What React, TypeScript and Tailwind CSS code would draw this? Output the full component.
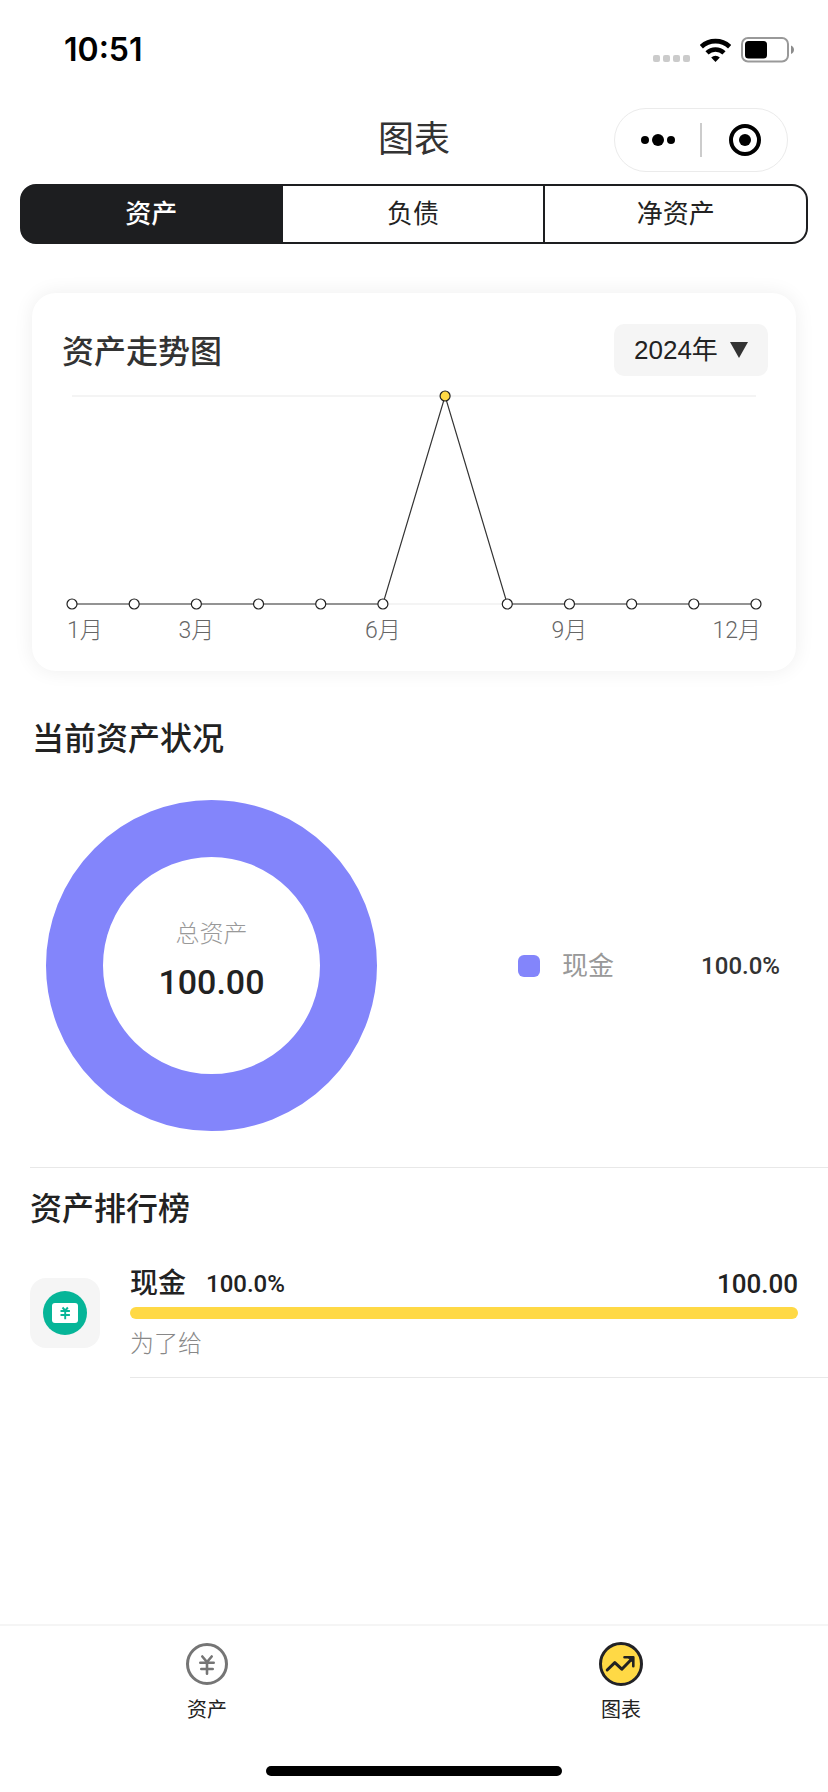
import clsx from 'clsx';
import { useState } from 'react';

const TABS = ['资产', '负债', '净资产'];
const YEARS = ['2024', '2023', '2022'];
const TREND = [0, 0, 0, 0, 0, 0, 100, 0, 0, 0, 0, 0];

const AXIS_LABELS: {
  month: number;
  anchor: 'start' | 'middle' | 'end';
}[] = [
  { month: 1, anchor: 'start' },
  { month: 3, anchor: 'middle' },
  { month: 6, anchor: 'middle' },
  { month: 9, anchor: 'middle' },
  { month: 12, anchor: 'end' },
];

const RANKING = [
  { name: '现金', percent: '100.0', amount: '100.00', note: '为了给' },
];

function StatusBar() {
  return (
    <div className="flex h-[100px] items-center justify-between pr-[34px] pl-16">
      <span className="font-['Inter',sans-serif] text-[32px] leading-10 font-semibold text-black">
        10:51
      </span>
      <div className="flex items-center gap-[10px]">
        <svg width="37" height="24" viewBox="0 0 37 24" fill="#cbcbcb">
          <rect x="0" y="17" width="7" height="7" rx="2" />
          <rect x="10" y="17" width="7" height="7" rx="2" />
          <rect x="20" y="17" width="7" height="7" rx="2" />
          <rect x="30" y="17" width="7" height="7" rx="2" />
        </svg>
        <svg width="31" height="24" viewBox="0 0 31 24" fill="none">
          <path
            d="M1.3 8.7A20.8 20.8 0 0 1 29.7 8.7"
            stroke="#000"
            strokeWidth="4.8"
          />
          <path
            d="M7 14.9A12.5 12.5 0 0 1 24 14.9"
            stroke="#000"
            strokeWidth="4.6"
          />
          <path d="M11.2 19.4A6.4 6.4 0 0 1 19.8 19.4L15.5 24Z" fill="#000" />
        </svg>
        <svg width="53" height="26" viewBox="0 0 53 26" fill="none">
          <rect
            x="1"
            y="1"
            width="46"
            height="23.5"
            rx="6"
            stroke="#999"
            strokeWidth="2"
          />
          <rect x="4" y="4" width="22" height="17.5" rx="3.5" fill="#000" />
          <path d="M50 8.5c4 1.6 4 7 0 8.6z" fill="#8c8c8c" />
        </svg>
      </div>
    </div>
  );
}

function NavBar() {
  return (
    <header className="grid h-20 grid-cols-[1fr_auto_1fr] items-center px-10">
      <span />
      <h1 className="text-[36px] leading-[48px] text-[#333]">图表</h1>
      <div className="flex h-16 w-[174px] items-center justify-self-end rounded-full border border-[#ebebeb]">
        <button
          aria-label="更多"
          className="flex flex-1 cursor-pointer justify-center"
        >
          <svg width="34" height="12" viewBox="0 0 34 12">
            <circle cx="4" cy="6" r="4" />
            <circle cx="17" cy="6" r="6" />
            <circle cx="30" cy="6" r="4" />
          </svg>
        </button>
        <span className="h-[34px] w-[2px] bg-[#ccc]" />
        <button
          aria-label="关闭"
          className="flex flex-1 cursor-pointer justify-center"
        >
          <svg width="32" height="32" viewBox="0 0 32 32">
            <circle
              cx="16"
              cy="16"
              r="14"
              fill="none"
              stroke="#000"
              strokeWidth="4"
            />
            <circle cx="16" cy="16" r="6" />
          </svg>
        </button>
      </div>
    </header>
  );
}

function TrendChart() {
  const left = 40;
  const step = 684 / 11;
  const top = 20;
  const bottom = 228;
  const points = TREND.map((value, i) => ({
    x: left + i * step,
    y: bottom - ((bottom - top) * value) / 100,
    active: value > 0,
  }));

  return (
    <svg viewBox="0 0 764 295" className="block h-auto w-full">
      <path d="M40 20H724M40 228H724" stroke="#f4f4f4" strokeWidth="2" />
      <polyline
        points={points.map(p => `${p.x},${p.y}`).join(' ')}
        fill="none"
        stroke="#333"
        strokeWidth="1.2"
      />
      {points.map(p => (
        <circle
          key={p.x}
          cx={p.x}
          cy={p.y}
          r="5"
          fill={p.active ? '#ffd945' : '#fff'}
          stroke="#222"
          strokeWidth="1.2"
        />
      ))}
      {AXIS_LABELS.map(({ month, anchor }) => {
        let x = left + (month - 1) * step;
        if (anchor === 'start') x -= 5;
        if (anchor === 'end') x += 5;
        return (
          <text
            key={month}
            x={x}
            y="262"
            textAnchor={anchor}
            className="fill-[#666] font-['Roboto','Noto_Sans_CJK_SC',sans-serif] text-[23px] font-light"
          >
            {month}月
          </text>
        );
      })}
    </svg>
  );
}

function TrendCard() {
  const [year, setYear] = useState('2024');

  return (
    <section className="mx-8 mt-[49px] rounded-3xl bg-white pt-[31px] shadow-[0_0_20px_rgba(0,0,0,0.07)]">
      <div className="flex items-center justify-between pr-7 pl-[30px]">
        <h2 className="pt-1 text-[32px] leading-[48px] font-medium text-[#333]">
          资产走势图
        </h2>
        <div className="relative">
          <select
            aria-label="年份"
            value={year}
            onChange={e => setYear(e.target.value)}
            className="h-[52px] w-[154px] cursor-pointer appearance-none rounded-[10px] bg-[#f5f5f5] pl-5 text-[26px] text-[#222]"
          >
            {YEARS.map(y => (
              <option key={y} value={y}>
                {y}年
              </option>
            ))}
          </select>
          <svg
            width="18"
            height="16"
            viewBox="0 0 18 16"
            className="pointer-events-none absolute top-[18px] right-5"
          >
            <path d="M0 0H18L9 16Z" fill="#333" />
          </svg>
        </div>
      </div>
      <TrendChart />
    </section>
  );
}

function CurrentAssets() {
  return (
    <section className="pt-11 pb-9">
      <h2 className="pl-8 text-[32px] leading-[48px] font-medium text-[#222]">
        当前资产状况
      </h2>
      <div className="mt-[37px] flex items-center justify-between pr-12 pl-[46px]">
        <div className="flex size-[331px] flex-col items-center justify-center rounded-full border-[57px] border-[#8385fb]">
          <span className="text-[24px] leading-9 font-light text-[#999]">
            总资产
          </span>
          <span className="mb-1 font-['Roboto',sans-serif] text-[34px] leading-[60px] font-medium text-[#222]">
            100.00
          </span>
        </div>
        <div className="flex w-[262px] items-center">
          <span className="size-[22px] rounded-md bg-[#8385fb]" />
          <span className="ml-[22px] text-[26px] leading-10 text-[#999]">
            现金
          </span>
          <span className="ml-auto font-['Roboto',sans-serif] text-[24px] leading-10 font-medium text-[#333]">
            100.0%
          </span>
        </div>
      </div>
    </section>
  );
}

function CashIcon() {
  return (
    <span className="flex size-[70px] shrink-0 items-center justify-center rounded-2xl bg-[#f5f5f5]">
      <svg width="44" height="44" viewBox="0 0 44 44" fill="none">
        <circle cx="22" cy="22" r="22" fill="#06b598" />
        <rect x="9" y="12" width="26" height="20" rx="3" fill="#fff" />
        <path
          d="M19.5 16.5l2.7 3 2.7-3M17.5 20h9.4M17.5 24h9.4M22.2 19.5V28.3"
          stroke="#06b598"
          strokeWidth="1.9"
        />
      </svg>
    </span>
  );
}

function Ranking() {
  return (
    <section className="ml-[30px] border-t border-[#e8e8e8] pt-[17px]">
      <h2 className="text-[32px] leading-[48px] font-medium text-[#222]">
        资产排行榜
      </h2>
      <ul className="mt-[31px]">
        {RANKING.map(item => (
          <li key={item.name}>
            <div className="flex items-center gap-[30px] pr-[30px] pb-[15px]">
              <CashIcon />
              <div className="flex-1">
                <div className="flex items-center leading-10 font-medium text-[#222]">
                  <span className="text-[28px]">{item.name}</span>
                  <span className="ml-5 font-['Roboto',sans-serif] text-[24px]">
                    {item.percent}%
                  </span>
                  <span className="ml-auto font-['Roboto',sans-serif] text-[26px]">
                    {item.amount}
                  </span>
                </div>
                <div className="mt-[3px] h-3">
                  <div
                    className="h-full rounded-full bg-[#ffd945]"
                    style={{ width: `${item.percent}%` }}
                  />
                </div>
                <p className="mt-[7px] text-[24px] leading-9 font-light text-[#888]">
                  {item.note}
                </p>
              </div>
            </div>
            <div className="ml-[100px] border-t border-[#e8e8e8]" />
          </li>
        ))}
      </ul>
    </section>
  );
}

function TabBar() {
  return (
    <footer className="border-t-2 border-[#f5f5f5]">
      <nav className="grid grid-cols-2 pt-4 text-[20px] leading-8 text-[#222]">
        <a href="#assets" className="flex flex-col items-center gap-2">
          <svg width="44" height="44" viewBox="0 0 44 44" fill="none">
            <g stroke="#757575" strokeLinecap="round">
              <circle cx="22" cy="22" r="19.5" strokeWidth="3" />
              <path
                d="M17.3 14.5l4.7 5.5 4.7-5.5M15.3 20.8h13.4M16.3 27h11.4M22 20.5v11.2"
                strokeWidth="2.6"
              />
            </g>
          </svg>
          资产
        </a>
        <a href="#charts" className="flex flex-col items-center gap-2">
          <svg width="44" height="44" viewBox="0 0 44 44" fill="none">
            <circle
              cx="22"
              cy="22"
              r="20.5"
              fill="#ffd945"
              stroke="#222226"
              strokeWidth="3"
            />
            <g stroke="#222" strokeLinecap="round" strokeLinejoin="round">
              <path d="M8.2 28L15.8 20.6 22.8 27.2 33.5 16.2" strokeWidth="3" />
              <path d="M25.5 15.3H34.3V24.2" strokeWidth="2.6" />
              <path d="M30 16h3.6v4z" fill="#222" strokeWidth="1" />
            </g>
          </svg>
          图表
        </a>
      </nav>
      <div className="mx-auto mt-10 mb-4 h-[10px] w-[296px] rounded-full bg-black" />
    </footer>
  );
}

export default function App() {
  const [tab, setTab] = useState(0);

  return (
    <div className="flex min-h-screen flex-col bg-white font-['Liberation_Sans','Noto_Sans_CJK_SC',sans-serif]">
      <StatusBar />
      <NavBar />
      <main className="flex-1 pt-1">
        <div className="mx-5 grid h-[60px] grid-cols-3">
          {TABS.map((name, i) => (
            <button
              key={name}
              onClick={() => setTab(i)}
              className={clsx(
                'cursor-pointer border-y-2 border-r-2 border-[#1d1e20] text-[26px] first:rounded-l-2xl first:border-l-2 last:rounded-r-2xl',
                tab === i
                  ? 'bg-[#1d1e20] font-medium text-white'
                  : 'text-[#222]',
              )}
            >
              {name}
            </button>
          ))}
        </div>
        <TrendCard />
        <CurrentAssets />
        <Ranking />
      </main>
      <TabBar />
    </div>
  );
}
